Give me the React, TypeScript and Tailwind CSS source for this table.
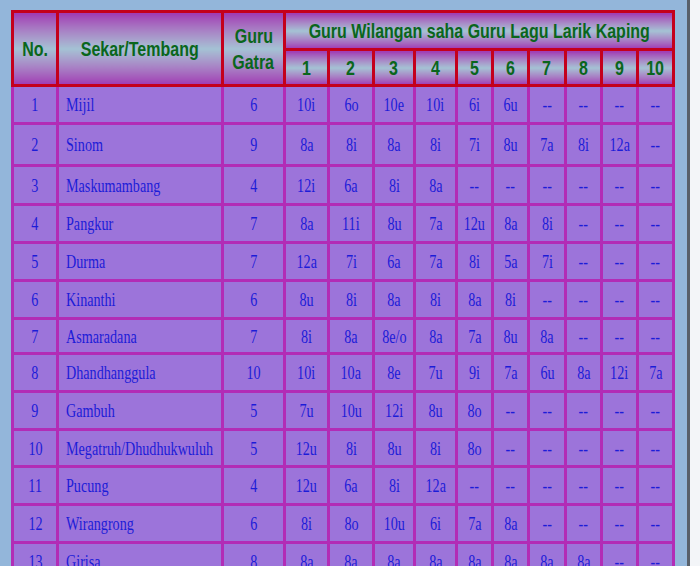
import React from "react";

type Row = {
  no: number;
  name: string;
  gatra: number;
  lagu: string[];
  h: string;
};

const fill = (vals: string[]) => [...vals, ...Array(10 - vals.length).fill("--")];

const rows: Row[] = [
  { no: 1, name: "Mijil", gatra: 6, lagu: fill(["10i", "6o", "10e", "10i", "6i", "6u"]), h: "h-[38px]" },
  { no: 2, name: "Sinom", gatra: 9, lagu: fill(["8a", "8i", "8a", "8i", "7i", "8u", "7a", "8i", "12a"]), h: "h-[42px]" },
  { no: 3, name: "Maskumambang", gatra: 4, lagu: fill(["12i", "6a", "8i", "8a"]), h: "h-[39px]" },
  { no: 4, name: "Pangkur", gatra: 7, lagu: fill(["8a", "11i", "8u", "7a", "12u", "8a", "8i"]), h: "h-[38px]" },
  { no: 5, name: "Durma", gatra: 7, lagu: fill(["12a", "7i", "6a", "7a", "8i", "5a", "7i"]), h: "h-[38px]" },
  { no: 6, name: "Kinanthi", gatra: 6, lagu: fill(["8u", "8i", "8a", "8i", "8a", "8i"]), h: "h-[38px]" },
  { no: 7, name: "Asmaradana", gatra: 7, lagu: fill(["8i", "8a", "8e/o", "8a", "7a", "8u", "8a"]), h: "h-[35px]" },
  { no: 8, name: "Dhandhanggula", gatra: 10, lagu: ["10i", "10a", "8e", "7u", "9i", "7a", "6u", "8a", "12i", "7a"], h: "h-[38px]" },
  { no: 9, name: "Gambuh", gatra: 5, lagu: fill(["7u", "10u", "12i", "8u", "8o"]), h: "h-[38px]" },
  { no: 10, name: "Megatruh/Dhudhukwuluh", gatra: 5, lagu: fill(["12u", "8i", "8u", "8i", "8o"]), h: "h-[37px]" },
  { no: 11, name: "Pucung", gatra: 4, lagu: fill(["12u", "6a", "8i", "12a"]), h: "h-[38px]" },
  { no: 12, name: "Wirangrong", gatra: 6, lagu: fill(["8i", "8o", "10u", "6i", "7a", "8a"]), h: "h-[38px]" },
  { no: 13, name: "Girisa", gatra: 8, lagu: fill(["8a", "8a", "8a", "8a", "8a", "8a", "8a", "8a"]), h: "h-[38px]" },
];

const widths = [
  "w-[45px]", "w-[165px]", "w-[62px]", "w-[44px]", "w-[45px]", "w-[41px]", "w-[42px]",
  "w-[36px]", "w-[36px]", "w-[37px]", "w-[36px]", "w-[36px]", "w-[36px]",
];

const head =
  "border-[3px] border-[#c4001c] bg-linear-to-b from-[#a03ab4] via-[#a4c2d4] to-[#a03ab4] text-[#0a661c] font-bold text-center align-middle p-0";
const cell = "border-[3px] border-[#b22cb6] bg-[#9c74da] text-[#1c1cd8] p-0 align-middle";

// condensed text: scaled horizontally, kept centred even when wider than the cell
const Narrow: React.FC<{ children: React.ReactNode; left?: boolean; head?: boolean }> = ({ children, left, head }) => (
  <div className={"flex " + (left ? "justify-start" : "justify-center")}>
    <span
      className={
        "shrink-0 whitespace-nowrap " +
        (head ? "scale-x-[0.8] " : "scale-x-[0.745] ") +
        (left ? "origin-left" : "origin-center")
      }
    >
      {children}
    </span>
  </div>
);

export default function App() {
  return (
    <div className="flex h-[566px] w-[700px] overflow-hidden">
      <div className="h-full w-[687px] bg-[#93b6da] pl-[11px] pt-[10px]">
        <table
          className="table-fixed border-collapse w-[662px] text-[20px] leading-none"
          style={{ fontFamily: "'Liberation Sans', Arial, sans-serif" }}
        >
          <colgroup>
            {widths.map((w, i) => (
              <col key={i} className={w} />
            ))}
          </colgroup>
          <thead>
            <tr className="h-[38px]">
              <th rowSpan={2} className={head}>
                <Narrow head>No.</Narrow>
              </th>
              <th rowSpan={2} className={head}>
                <Narrow head>Sekar/Tembang</Narrow>
              </th>
              <th rowSpan={2} className={head + " leading-[26px]"}>
                <Narrow head>Guru</Narrow>
                <Narrow head>Gatra</Narrow>
              </th>
              <th colSpan={10} className={head}>
                <Narrow head>Guru Wilangan saha Guru Lagu Larik Kaping</Narrow>
              </th>
            </tr>
            <tr className="h-[36px]">
              {Array.from({ length: 10 }, (_, i) => (
                <th key={i} className={head}>
                  <Narrow head>{i + 1}</Narrow>
                </th>
              ))}
            </tr>
          </thead>
          <tbody style={{ fontFamily: "'Liberation Serif', 'Times New Roman', serif" }} className="text-[19px]">
            {rows.map((r) => (
              <tr key={r.no} className={r.h}>
                <td className={cell + " text-center"}>
                  <Narrow>{r.no}</Narrow>
                </td>
                <td className={cell + " pl-[7px] text-left"}>
                  <Narrow left>{r.name}</Narrow>
                </td>
                <td className={cell + " text-center"}>
                  <Narrow>{r.gatra}</Narrow>
                </td>
                {r.lagu.map((v, i) => (
                  <td key={i} className={cell + " text-center"}>
                    <Narrow>{v}</Narrow>
                  </td>
                ))}
              </tr>
            ))}
          </tbody>
        </table>
      </div>
      <div className="h-full w-[3px] bg-[#58606a]" />
      <div className="h-full flex-1 bg-[#f3f5f8]" />
    </div>
  );
}
